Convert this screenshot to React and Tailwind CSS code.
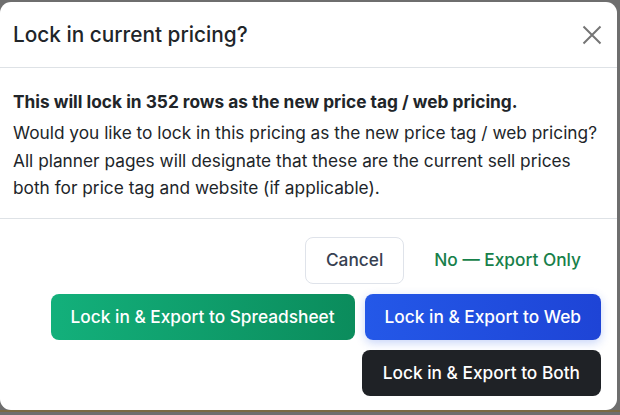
import React from "react";

const LockPricingModal = () => {
    return (
        <div className="w-[620px] h-[415px] bg-[#6e6e6e] overflow-hidden font-['Inter',sans-serif]">
            <div className="h-[2px]" />
            <div className="w-[617px] h-[408px] bg-white rounded-[11px] flex flex-col">
                <div className="h-[66px] flex items-center justify-between pl-[13px] pr-[15px] border-b border-[#dee2e6]">
                    <h2 className="text-[20.8px] font-medium text-[#212529]">Lock in current pricing?</h2>
                    <button className="w-[20px] h-[20px] text-[#757575]">
                        <svg viewBox="0 0 20 20" width="20" height="20" fill="none" stroke="currentColor" strokeWidth="2">
                            <path d="M1.5 1.5 L18.5 18.5 M18.5 1.5 L1.5 18.5" />
                        </svg>
                    </button>
                </div>
                <div className="pt-[20px] pb-[16px] px-[13px] border-b border-[#dee2e6] text-[17.3px] text-[#212529]">
                    <p className="font-bold leading-[27px] mb-[4px]">This will lock in 352 rows as the new price tag / web pricing.</p>
                    <p className="leading-[27.5px]">
                        Would you like to lock in this pricing as the new price tag / web pricing? All planner pages will
                        designate that these are the current sell prices both for price tag and website (if applicable).
                    </p>
                </div>
                <div className="flex flex-col items-end gap-[10px] pt-[18px] pr-[16px] text-[17.3px] font-medium">
                    <div className="flex gap-[10px]">
                        <button className="h-[47px] px-[20px] rounded-[8px] border border-[#dfe3ea] text-[#374151]">
                            Cancel
                        </button>
                        <button className="h-[47px] px-[20px] rounded-[8px] text-[#17804a]">No — Export Only</button>
                    </div>
                    <div className="flex gap-[10px]">
                        <button className="h-[46px] px-[20px] rounded-[8px] text-white bg-gradient-to-r from-[#13b07b] to-[#0b8c5c]">
                            Lock in &amp; Export to Spreadsheet
                        </button>
                        <button className="h-[46px] px-[20px] rounded-[8px] text-white bg-gradient-to-r from-[#2458e8] to-[#1e44d6] shadow-[0_3px_10px_rgba(37,88,232,0.25)]">
                            Lock in &amp; Export to Web
                        </button>
                    </div>
                    <button className="h-[46px] px-[21px] rounded-[8px] text-white bg-[#1f2226]">
                        Lock in &amp; Export to Both
                    </button>
                </div>
            </div>
            <div className="h-[2px] bg-[#7a6a44]" />
        </div>
    );
};

export default LockPricingModal;
